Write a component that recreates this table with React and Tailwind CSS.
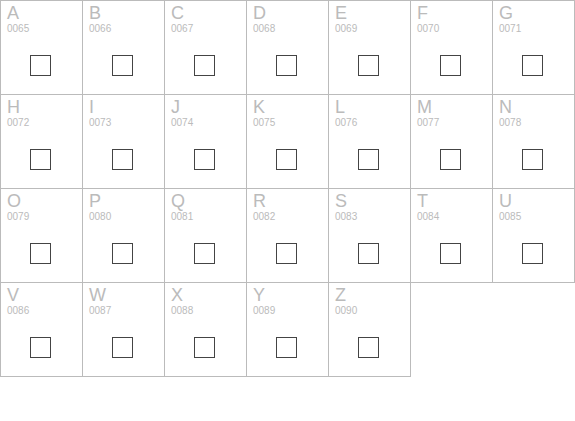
export default function App() {
  const letters = "ABCDEFGHIJKLMNOPQRSTUVWXYZ".split("");
  return (
    <div className="w-[575px] h-[421px] bg-white" style={{ fontFamily: '"Liberation Sans", Arial, sans-serif' }}>
      <div className="grid grid-cols-[repeat(7,82px)] w-[575px] border-l border-t border-[#bbbbbb]">
        {letters.map((l, i) => (
          <div key={l} className="h-[94px] border-r border-b border-[#bbbbbb]">
            <div className="pl-[6px] pt-[2px] text-[18px] leading-[20px] text-[#bbbbbb]">{l}</div>
            <div className="pl-[6px] text-[10px] leading-[12px] text-[#bbbbbb]">{String(65 + i).padStart(4, "0")}</div>
            <div className="ml-[29px] mt-[20px] w-[21px] h-[21px] border border-[#444444]"></div>
          </div>
        ))}
      </div>
    </div>
  );
}
